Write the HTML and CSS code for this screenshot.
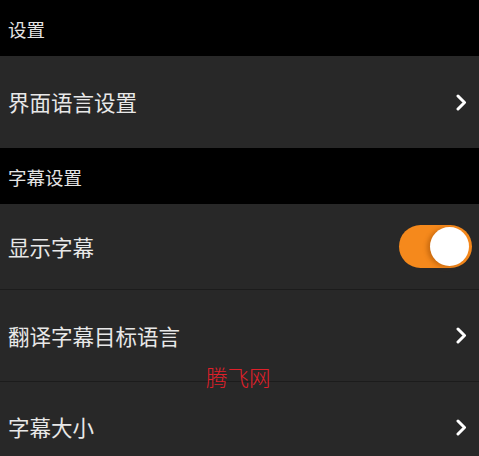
FILE: index.html
```html
<!DOCTYPE html>
<html lang="zh">
<head>
<meta charset="utf-8">
<link rel="stylesheet" href="styles.css">
</head>
<body>
<div class="page">
  <div class="section-title">设置</div>
  <div class="row row-tall">
    <span class="label">界面语言设置</span>
    <svg class="chev" width="11" height="17" viewBox="0 0 11 17"><path d="M2 2 L8.5 8.5 L2 15" fill="none" stroke="#fff" stroke-width="3" stroke-linecap="round" stroke-linejoin="round"/></svg>
  </div>
  <div class="section-title">字幕设置</div>
  <div class="row row-toggle">
    <span class="label">显示字幕</span>
    <div class="toggle"><div class="knob"></div></div>
  </div>
  <div class="row row-tall divided">
    <span class="label">翻译字幕目标语言</span>
    <svg class="chev" width="11" height="17" viewBox="0 0 11 17"><path d="M2 2 L8.5 8.5 L2 15" fill="none" stroke="#fff" stroke-width="3" stroke-linecap="round" stroke-linejoin="round"/></svg>
  </div>
  <div class="row divided last">
    <span class="label">字幕大小</span>
    <svg class="chev" width="11" height="17" viewBox="0 0 11 17"><path d="M2 2 L8.5 8.5 L2 15" fill="none" stroke="#fff" stroke-width="3" stroke-linecap="round" stroke-linejoin="round"/></svg>
    <span class="watermark">腾飞网</span>
  </div>
</div>
</body>
</html>
```

FILE: styles.css
```css
html, body {
  margin: 0;
  padding: 0;
  background: #000;
}
body {
  width: 479px;
  height: 456px;
  overflow: hidden;
  font-family: "Noto Sans CJK SC", "Noto Sans", sans-serif;
  color: #e8e8e8;
}
.page {
  display: flex;
  flex-direction: column;
  height: 456px;
  overflow: hidden;
}
.section-title {
  height: 56px;
  flex: none;
  display: flex;
  align-items: center;
  padding: 2px 0 0 8px;
  box-sizing: border-box;
  font-size: 18.5px;
  color: #e4e4e4;
  background: #000;
}
.row {
  position: relative;
  flex: none;
  display: flex;
  align-items: center;
  justify-content: space-between;
  padding: 0 12px 0 8px;
  background: #282828;
  box-sizing: border-box;
}
.row-tall {
  height: 92px;
}
.row-toggle {
  height: 85px;
  padding-right: 7px;
}
.divided {
  border-top: 1px solid #1c1c1c;
}
.last {
  height: 75px;
  align-items: flex-start;
  padding-top: 33px;
}
.last .chev {
  margin-top: 4px;
}
.label {
  font-size: 21.5px;
  line-height: 24px;
  color: #e8e8e8;
}
.chev {
  display: block;
}
.toggle {
  width: 73px;
  height: 43px;
  border-radius: 22px;
  background: #f5891c;
  position: relative;
  box-sizing: border-box;
}
.knob {
  position: absolute;
  top: 2px;
  right: 3px;
  width: 39px;
  height: 39px;
  border-radius: 50%;
  background: #fff;
  box-shadow: -3px 1px 4px rgba(150, 70, 0, 0.45);
}
.watermark {
  position: absolute;
  left: 206px;
  top: -17px;
  font-size: 21.5px;
  line-height: 24px;
  color: #e0202a;
  font-family: "Noto Sans CJK SC", sans-serif;
  font-weight: 300;
}
```
